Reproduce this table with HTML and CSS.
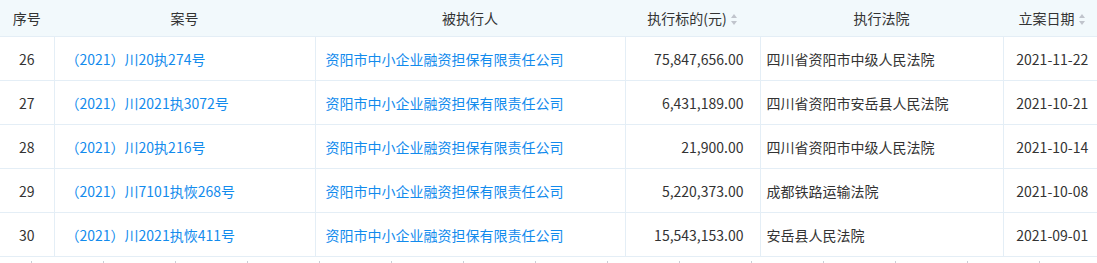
FILE: index.html
```html
<!DOCTYPE html>
<html lang="zh-CN">
<head>
<meta charset="utf-8">
<link rel="stylesheet" href="styles.css">
</head>
<body>
<div class="wrap">
<table class="tbl">
  <colgroup>
    <col class="c1"><col class="c2"><col class="c3"><col class="c4"><col class="c5"><col class="c6">
  </colgroup>
  <thead>
    <tr>
      <th>序号</th>
      <th>案号</th>
      <th>被执行人</th>
      <th>执行标的(元)<span class="sort"></span></th>
      <th>执行法院</th>
      <th>立案日期<span class="sort"></span></th>
    </tr>
  </thead>
  <tbody>
    <tr>
      <td class="tc">26</td>
      <td class="case"><a>（2021）川20执274号</a></td>
      <td class="party"><a>资阳市中小企业融资担保有限责任公司</a></td>
      <td class="num">75,847,656.00</td>
      <td class="court">四川省资阳市中级人民法院</td>
      <td class="tc">2021-11-22</td>
    </tr>
    <tr>
      <td class="tc">27</td>
      <td class="case"><a>（2021）川2021执3072号</a></td>
      <td class="party"><a>资阳市中小企业融资担保有限责任公司</a></td>
      <td class="num">6,431,189.00</td>
      <td class="court">四川省资阳市安岳县人民法院</td>
      <td class="tc">2021-10-21</td>
    </tr>
    <tr>
      <td class="tc">28</td>
      <td class="case"><a>（2021）川20执216号</a></td>
      <td class="party"><a>资阳市中小企业融资担保有限责任公司</a></td>
      <td class="num">21,900.00</td>
      <td class="court">四川省资阳市中级人民法院</td>
      <td class="tc">2021-10-14</td>
    </tr>
    <tr>
      <td class="tc">29</td>
      <td class="case"><a>（2021）川7101执恢268号</a></td>
      <td class="party"><a>资阳市中小企业融资担保有限责任公司</a></td>
      <td class="num">5,220,373.00</td>
      <td class="court">成都铁路运输法院</td>
      <td class="tc">2021-10-08</td>
    </tr>
    <tr>
      <td class="tc">30</td>
      <td class="case"><a>（2021）川2021执恢411号</a></td>
      <td class="party"><a>资阳市中小企业融资担保有限责任公司</a></td>
      <td class="num">15,543,153.00</td>
      <td class="court">安岳县人民法院</td>
      <td class="tc">2021-09-01</td>
    </tr>
  </tbody>
</table>
<div class="ruler"></div>
</div>
</body>
</html>
```
FILE: styles.css
```css
html, body {
  margin: 0;
  padding: 0;
  background: #fff;
  overflow: hidden;
}
body {
  font-family: "Noto Sans CJK SC", "Noto Sans", sans-serif;
  font-size: 14px;
  color: #333;
}
.wrap {
  width: 1101px;
}
.tbl {
  border-collapse: collapse;
  table-layout: fixed;
  width: 1101px;
}
.c1 { width: 54px; }
.c2 { width: 261px; }
.c3 { width: 310px; }
.c4 { width: 135px; }
.c5 { width: 243px; }
.c6 { width: 98px; }
.tbl th {
  background: #f2f9fc;
  font-weight: normal;
  color: #333;
  height: 36px;
  padding: 0;
  text-align: center;
  border-bottom: 1px solid #e4eef6;
  border-right: 1px solid #f2f9fc;
  white-space: nowrap;
  line-height: 20px;
}
.tbl td {
  height: 43px;
  padding: 0 10px;
  border-bottom: 1px solid #e4eef6;
  border-left: 1px solid #e4eef6;
  white-space: nowrap;
  line-height: 20px;
}
.tbl td:first-child {
  border-left: none;
}
.tc { text-align: center; }
.case { padding-left: 11px !important; }
.party { padding-left: 10px !important; }
.num { text-align: right; padding-right: 16px !important; }
.court { padding-left: 6px !important; }
.tbl a {
  color: #128bed;
  text-decoration: none;
}
.sort {
  display: inline-block;
  width: 7px;
  height: 11px;
  margin-left: 4px;
  vertical-align: -1px;
  position: relative;
}
.sort::before,
.sort::after {
  content: "";
  position: absolute;
  left: 0;
  border-left: 3.5px solid transparent;
  border-right: 3.5px solid transparent;
}
.sort::before {
  top: 0;
  border-bottom: 4px solid #c0c4cc;
}
.sort::after {
  bottom: 0;
  border-top: 4px solid #c0c4cc;
}
.ruler {
  height: 5px;
  margin-top: 1px;
  border-bottom: 1px solid #c9ced6;
  background-image: linear-gradient(to right, #c9ced6 1px, transparent 1px);
  background-size: 72px 3px;
  background-position: 31px 3px;
  background-repeat: repeat-x;
}
```
